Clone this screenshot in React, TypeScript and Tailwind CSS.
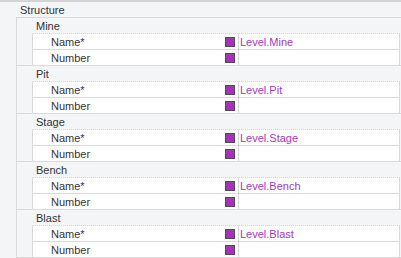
import React from "react";

const groups = [
  { title: "Mine", value: "Level.Mine" },
  { title: "Pit", value: "Level.Pit" },
  { title: "Stage", value: "Level.Stage" },
  { title: "Bench", value: "Level.Bench" },
  { title: "Blast", value: "Level.Blast" },
];

function Swatch() {
  return <div className="w-[10px] h-[10px] bg-[#a235b3] border border-[#4d4d4d] shrink-0" />;
}

function ItemRow({ label, value, last }: { label: string; value?: string; last?: boolean }) {
  return (
    <div className={last ? "flex h-[15px]" : "flex h-[16px] border-b border-[#dadada]"}>
      <div className="w-[206px] flex items-center justify-between pl-[18px] pr-[3px] bg-white border-r border-[#dadada]">
        <span className="pt-[2px]">{label}</span>
        <Swatch />
      </div>
      <div className="flex-1 flex items-center pl-[1px] bg-white text-[#a23cb6]">
        <span className="pt-[2px]">{value}</span>
      </div>
    </div>
  );
}

export default function App() {
  return (
    <div
      className="w-[401px] h-[258px] overflow-hidden bg-[#f4f5f7] border-t-2 border-[#d4d4d4] text-[11px] text-[#333333] leading-none"
      style={{ fontFamily: '"Liberation Sans", Arial, sans-serif' }}
    >
      <div className="h-[16px] flex items-center pl-[4px] ml-[16px] border-b border-[#dadada]">
        <span className="pt-[2px]">Structure</span>
      </div>
      {groups.map((g) => (
        <div key={g.title} className="ml-[16px] border-l border-b border-[#dadada]">
          <div className="h-[15px] flex items-center pl-[19px]">
            <span className="pt-[2px]">{g.title}</span>
          </div>
          <div
            className="ml-[15px] mr-[1px] border-l border-r border-t border-t-[#d6d6d6] border-l-[#dadada] border-r-[#dadada]"
            style={{ borderTopStyle: "dotted", borderLeftStyle: "solid", borderRightStyle: "solid" }}
          >
            <ItemRow label="Name*" value={g.value} />
            <ItemRow label="Number" last />
          </div>
        </div>
      ))}
    </div>
  );
}
